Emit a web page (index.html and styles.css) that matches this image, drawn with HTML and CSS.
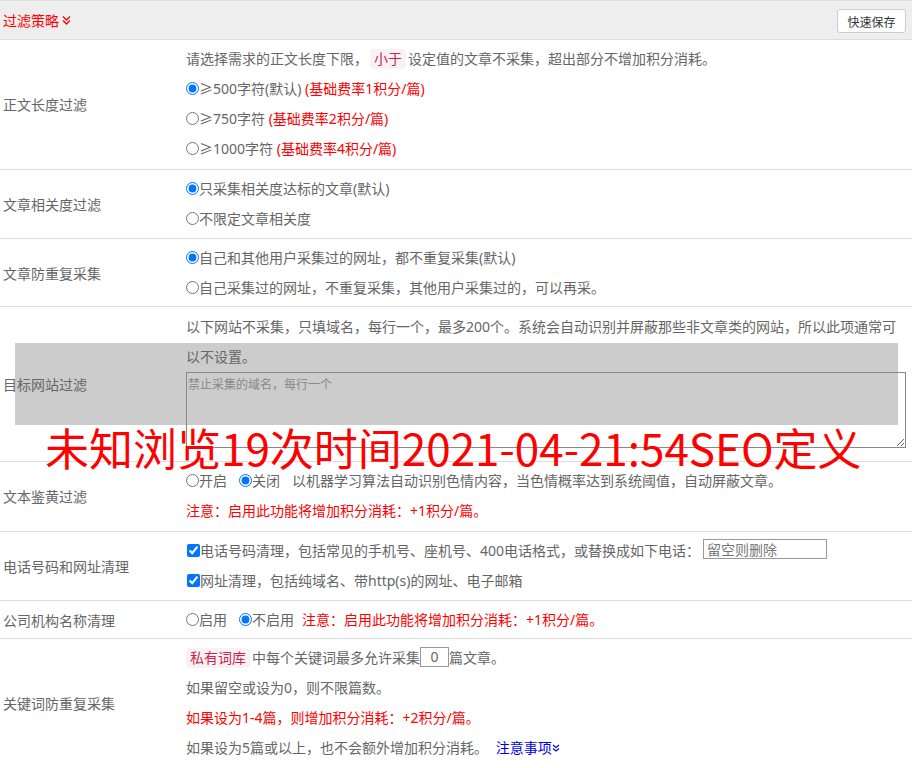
FILE: index.html
```html
<!DOCTYPE html>
<html lang="zh-CN">
<head>
<meta charset="utf-8">
<title>过滤策略</title>
<link rel="stylesheet" href="styles.css">
</head>
<body>
<div class="panel">
  <div class="head">
    <span class="title">过滤策略 <svg class="chev" width="9" height="10" viewBox="0 0 9 10"><polyline points="1,1.5 4.5,5 8,1.5" /><polyline points="1,5.5 4.5,9 8,5.5" /></svg></span>
    <button class="save" type="button">快速保存</button>
  </div>

  <div class="row r-first">
    <div class="label">正文长度过滤</div>
    <div class="body">
      <div class="line">请选择需求的正文长度下限，<span class="tag">小于</span>设定值的文章不采集，超出部分不增加积分消耗。</div>
      <div class="line"><label><input type="radio" name="len" checked>≥500字符(默认)</label> <span class="red">(基础费率1积分/篇)</span></div>
      <div class="line"><label><input type="radio" name="len">≥750字符</label> <span class="red">(基础费率2积分/篇)</span></div>
      <div class="line"><label><input type="radio" name="len">≥1000字符</label> <span class="red">(基础费率4积分/篇)</span></div>
    </div>
  </div>

  <div class="row">
    <div class="label">文章相关度过滤</div>
    <div class="body">
      <div class="line"><label><input type="radio" name="rel" checked>只采集相关度达标的文章(默认)</label></div>
      <div class="line"><label><input type="radio" name="rel">不限定文章相关度</label></div>
    </div>
  </div>

  <div class="row r-tight">
    <div class="label">文章防重复采集</div>
    <div class="body">
      <div class="line"><label><input type="radio" name="dup" checked>自己和其他用户采集过的网址，都不重复采集(默认)</label></div>
      <div class="line"><label><input type="radio" name="dup">自己采集过的网址，不重复采集，其他用户采集过的，可以再采。</label></div>
    </div>
  </div>

  <div class="row r-site">
    <div class="label">目标网站过滤</div>
    <div class="body">
      <p class="para">以下网站不采集，只填域名，每行一个，最多200个。系统会自动识别并屏蔽那些非文章类的网站，所以此项通常可以不设置。</p>
      <textarea class="domains" placeholder="禁止采集的域名，每行一个"></textarea>
    </div>
  </div>

  <div class="row r-porn">
    <div class="label">文本鉴黄过滤</div>
    <div class="body">
      <div class="line"><label class="opt"><input type="radio" name="porn">开启</label><label class="opt"><input type="radio" name="porn" checked>关闭</label>以机器学习算法自动识别色情内容，当色情概率达到系统阈值，自动屏蔽文章。</div>
      <div class="line red">注意：启用此功能将增加积分消耗：+1积分/篇。</div>
    </div>
  </div>

  <div class="row">
    <div class="label">电话号码和网址清理</div>
    <div class="body">
      <div class="line"><label><input type="checkbox" checked>电话号码清理，包括常见的手机号、座机号、400电话格式，或替换成如下电话：</label><input class="phone" type="text" placeholder="留空则删除"></div>
      <div class="line"><label><input type="checkbox" checked>网址清理，包括纯域名、带http(s)的网址、电子邮箱</label></div>
    </div>
  </div>

  <div class="row r-tight">
    <div class="label">公司机构名称清理</div>
    <div class="body">
      <div class="line"><label class="opt"><input type="radio" name="org">启用</label><label class="opt opt2"><input type="radio" name="org" checked>不启用</label><span class="red">注意：启用此功能将增加积分消耗：+1积分/篇。</span></div>
    </div>
  </div>

  <div class="row r-last">
    <div class="label">关键词防重复采集</div>
    <div class="body">
      <div class="line"><span class="tag tag-l">私有词库</span>中每个关键词最多允许采集<input class="num" type="text" value="0">篇文章。</div>
      <div class="line">如果留空或设为0，则不限篇数。</div>
      <div class="line red">如果设为1-4篇，则增加积分消耗：+2积分/篇。</div>
      <div class="line">如果设为5篇或以上，也不会额外增加积分消耗。 <a class="more" href="#">注意事项<svg class="chev-s" width="8" height="8" viewBox="0 0 8 8"><polyline points="1,1 4,3.5 7,1" /><polyline points="1,4.5 4,7 7,4.5" /></svg></a></div>
    </div>
  </div>

  <div class="mask"></div>
  <div class="stamp">未知浏览19次时间2021-04-21:54SEO定义</div>
</div>
</body>
</html>
```

FILE: styles.css
```css
html {
  background: #fff;
}

body {
  margin: 0;
  padding: 0;
  font-family: "Noto Sans", "Noto Sans CJK SC", sans-serif;
  font-size: 14px;
  color: #666;
}

.panel {
  position: relative;
  width: 912px;
}

.head {
  height: 38px;
  background: #eee;
  border-top: 1px solid #ddd;
  border-bottom: 1px solid #ddd;
  display: flex;
  align-items: center;
  justify-content: space-between;
  padding: 0 6px 0 3px;
}

.title {
  color: #f00;
  font-size: 14px;
  display: flex;
  align-items: center;
  gap: 3px;
}

.chev {
  fill: none;
  stroke: #f00;
  stroke-width: 1.3;
}

.save {
  width: 69px;
  height: 24px;
  margin-top: 2px;
  background: #fff;
  border: 1px solid #ccc;
  border-radius: 3px;
  color: #333;
  font-family: "Noto Sans CJK SC", sans-serif;
  font-size: 12px;
  padding: 0;
}

.row {
  display: grid;
  grid-template-columns: 186px 1fr;
  border-bottom: 1px solid #ddd;
  padding: 4px 0;
}

.r-first {
  padding-bottom: 5px;
}

.r-tight {
  padding-bottom: 3px;
}

.r-porn {
  padding-bottom: 5px;
}

.r-last {
  border-bottom: none;
}

.label {
  display: flex;
  align-items: center;
  padding-left: 3px;
}

.body {
  padding-right: 6px;
}

.line {
  height: 30px;
  line-height: 30px;
  white-space: nowrap;
}

.para {
  margin: 0;
  line-height: 30px;
  padding-top: 1px;
}

.red {
  color: #f00;
}

.tag {
  display: inline-block;
  line-height: 20px;
  padding: 0 4px;
  margin: 0 2px;
  background: #f9f2f4;
  color: #c7254e;
  border-radius: 4px;
}

.tag-l {
  margin-left: 0;
}

label {
  cursor: pointer;
}

input[type="radio"],
input[type="checkbox"] {
  width: 13px;
  height: 13px;
  margin: 0;
  vertical-align: -1px;
}

input[type="checkbox"] {
  margin-left: 1px;
}

.opt {
  margin-right: 12px;
}

.opt2 {
  margin-right: 8px;
}

.domains {
  display: block;
  box-sizing: border-box;
  width: 100%;
  height: 76px;
  margin: 0 0 9px;
  border: 1px solid #888;
  background: transparent;
  padding: 2px 1px;
  font-family: "Noto Sans CJK SC", sans-serif;
  font-size: 12px;
  color: #666;
  resize: both;
}

.domains::placeholder {
  color: #888;
}

.phone {
  box-sizing: border-box;
  width: 124px;
  height: 20px;
  margin-left: 3px;
  border: 1px solid #999;
  padding: 0 3px;
  font-family: "Noto Sans CJK SC", sans-serif;
  font-size: 14px;
  color: #666;
  vertical-align: 1px;
}

.phone::placeholder {
  color: #777;
}

.num {
  box-sizing: border-box;
  width: 29px;
  height: 20px;
  border: 1px solid #999;
  padding: 0;
  text-align: center;
  font-family: "Noto Sans", sans-serif;
  font-size: 14px;
  color: #666;
  vertical-align: 1px;
}

.more {
  color: #00e;
  text-decoration: none;
  margin-left: 4px;
}

.chev-s {
  fill: none;
  stroke: #00e;
  stroke-width: 1.2;
  vertical-align: 1px;
}

.mask {
  position: absolute;
  left: 15px;
  top: 343px;
  width: 883px;
  height: 82px;
  background: #ccc;
  z-index: -1;
}

.stamp {
  position: absolute;
  left: 45px;
  top: 427px;
  font-family: "Noto Sans CJK SC", sans-serif;
  font-size: 44px;
  line-height: 40px;
  color: #f00;
  white-space: nowrap;
}
```
